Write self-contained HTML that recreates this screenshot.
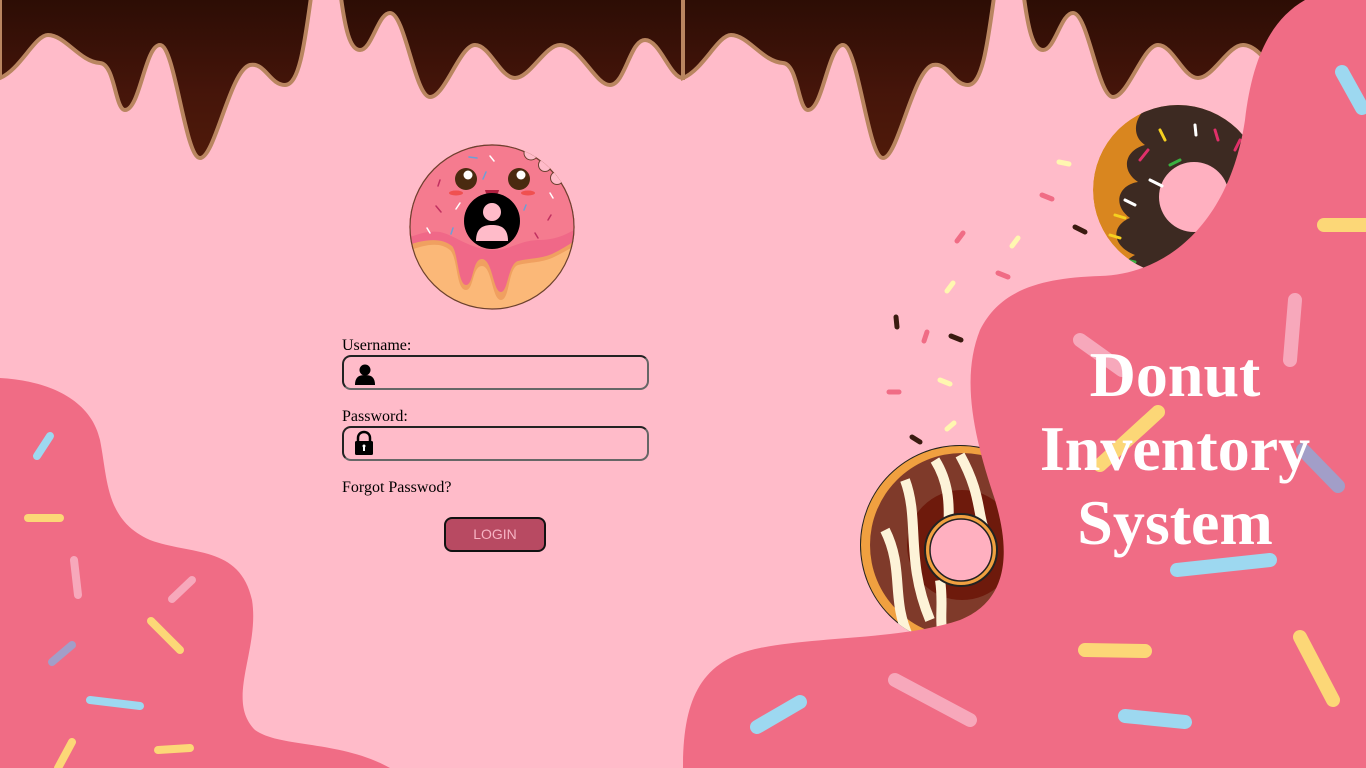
<!DOCTYPE html>
<html><head><meta charset="utf-8"><style>
html,body{margin:0;padding:0;width:1366px;height:768px;overflow:hidden;background:#ffbbc9;font-family:"Liberation Serif",serif}
svg{position:absolute;left:0;top:0}
.lbl{position:absolute;left:342px;font-size:16px;color:#000}
.inp{position:absolute;left:342px;width:303px;height:31px;border:2px solid #222;border-right-color:#666;border-bottom-color:#666;border-radius:9px;box-sizing:content-box}
.btn{position:absolute;left:444px;top:517px;width:98px;height:31px;background:#b84a62;border:2px solid #111;border-radius:8px;color:#f7b3c3;font-family:"Liberation Sans",sans-serif;font-size:14px;text-align:center;line-height:31px}
.title{position:absolute;left:985px;width:380px;top:338px;text-align:center;color:#fff;font-weight:bold;font-size:64px;line-height:74px}
</style></head><body>
<svg width="1366" height="768" viewBox="0 0 1366 768">
<defs>
<linearGradient id="ch" x1="0" y1="0" x2="0" y2="1"><stop offset="0" stop-color="#2a0c04"/><stop offset="0.6" stop-color="#45150a"/><stop offset="1" stop-color="#4f1a0a"/></linearGradient>
<g id="drip"><path d="M0,-10 L0,78 C20,70 35,35 48,35 C65,35 80,62 100,63 C115,64 115,110 125,110 C140,110 145,45 160,45 C175,45 185,158 200,158 C215,158 230,70 250,65 C265,62 270,85 285,85 C300,85 305,40 312,-10 L340,-10 C345,30 350,50 360,50 C372,50 378,13 390,13 C405,13 415,97 430,97 C445,97 460,45 475,45 C490,45 500,78 515,78 C530,78 545,45 560,45 C580,45 595,85 610,85 C625,85 630,40 645,40 C660,40 670,78 683,78 L683,-10 Z" fill="url(#ch)" stroke="#b98560" stroke-width="4"/></g>
<clipPath id="c1"><circle cx="1178" cy="190" r="85"/></clipPath>
<clipPath id="c2"><circle cx="960" cy="545" r="100"/></clipPath>
<clipPath id="c3"><circle cx="492" cy="227" r="82.6"/></clipPath>
</defs>
<use href="#drip"/>
<use href="#drip" x="683"/>

<g clip-path="url(#c1)">
<circle cx="1178" cy="190" r="85" fill="#d9861f"/>
<path d="M1150,105 C1180,95 1230,100 1265,130 L1265,290 L1150,290 C1125,280 1115,265 1135,255 C1110,245 1112,225 1130,218 C1112,205 1118,185 1138,182 C1120,170 1125,150 1145,145 C1130,135 1135,115 1150,105Z" fill="#3d2a22"/>
<circle cx="1194" cy="197" r="35" fill="#ffb0c0"/>
<g stroke-width="3" stroke-linecap="round"><line x1="1160" y1="130" x2="1165" y2="140" stroke="#f5d020"/><line x1="1195" y1="125" x2="1196" y2="135" stroke="#fff"/><line x1="1215" y1="130" x2="1218" y2="140" stroke="#e0306a"/><line x1="1150" y1="180" x2="1162" y2="186" stroke="#fff"/><line x1="1125" y1="200" x2="1135" y2="205" stroke="#fff"/><line x1="1115" y1="215" x2="1125" y2="218" stroke="#f5d020"/><line x1="1170" y1="165" x2="1180" y2="160" stroke="#3ab040"/><line x1="1240" y1="140" x2="1235" y2="150" stroke="#e0306a"/><line x1="1110" y1="235" x2="1120" y2="238" stroke="#f5d020"/><line x1="1140" y1="160" x2="1148" y2="150" stroke="#e0306a"/><line x1="1125" y1="260" x2="1135" y2="262" stroke="#3ab040"/></g>
</g>
<g clip-path="url(#c2)">
<circle cx="960" cy="545" r="100" fill="#f0a040" stroke="#222" stroke-width="2"/>
<circle cx="962" cy="545" r="92" fill="#7f3a2a"/>
<circle cx="962" cy="545" r="55" fill="#6e1a0c"/>
<g stroke="#fdf3d8" stroke-width="10" fill="none"><path d="M905,480 C920,520 905,560 930,620"/><path d="M935,460 C960,500 940,540 955,520"/><path d="M960,455 C985,500 975,520 990,540"/><path d="M885,530 C905,570 890,600 910,640"/><path d="M940,580 C945,610 935,630 950,650"/></g>
<circle cx="961" cy="550" r="36" fill="#f0a040" stroke="#222" stroke-width="2"/>
<circle cx="961" cy="550" r="31" fill="#ffb0c0" stroke="#222" stroke-width="1.5"/>
</g>

<g stroke-width="5" stroke-linecap="round">
<line x1="1059" y1="162" x2="1069" y2="164" stroke="#fff7b0"/>
<line x1="1042" y1="195" x2="1052" y2="199" stroke="#f06c85"/>
<line x1="1075" y1="227" x2="1085" y2="232" stroke="#3a1a10"/>
<line x1="957" y1="241" x2="963" y2="233" stroke="#f06c85"/>
<line x1="1012" y1="246" x2="1018" y2="238" stroke="#fff7b0"/>
<line x1="998" y1="273" x2="1008" y2="277" stroke="#f06c85"/>
<line x1="947" y1="291" x2="953" y2="283" stroke="#fff7b0"/>
<line x1="896" y1="317" x2="897" y2="327" stroke="#3a1a10"/>
<line x1="924" y1="341" x2="927" y2="332" stroke="#f06c85"/>
<line x1="951" y1="336" x2="961" y2="340" stroke="#3a1a10"/>
<line x1="940" y1="380" x2="950" y2="384" stroke="#fff7b0"/>
<line x1="889" y1="392" x2="899" y2="392" stroke="#f06c85"/>
<line x1="947" y1="429" x2="954" y2="423" stroke="#fff7b0"/>
<line x1="912" y1="437" x2="920" y2="442" stroke="#3a1a10"/>
</g>

<path d="M1305,0 L1366,0 L1366,768 L683,768 C683,700 700,660 760,648 C820,636 900,640 960,620 C1010,600 1010,550 995,500 C975,440 960,380 980,330 C1000,290 1040,278 1100,276 C1170,274 1230,220 1245,120 C1252,60 1270,20 1305,0Z" fill="#f06c85"/>
<path d="M0,378 C40,380 90,395 100,440 C108,480 105,520 150,540 C190,555 240,545 252,600 C260,650 225,700 255,730 C280,748 340,740 390,768 L0,768Z" fill="#f06c85"/>

<g stroke-width="14" stroke-linecap="round">
<line x1="1342" y1="72" x2="1362" y2="108" stroke="#9dd8f0"/>
<line x1="1324" y1="225" x2="1366" y2="225" stroke="#fcd777"/>
<line x1="1295" y1="300" x2="1290" y2="360" stroke="#f7a8bb"/>
<line x1="1080" y1="340" x2="1122" y2="370" stroke="#f7a8bb"/>
<line x1="1100" y1="465" x2="1158" y2="412" stroke="#fcd777"/>
<line x1="1303" y1="450" x2="1338" y2="486" stroke="#a29ec8"/>
<line x1="1177" y1="570" x2="1270" y2="560" stroke="#9dd8f0"/>
<line x1="1085" y1="650" x2="1145" y2="651" stroke="#fcd777"/>
<line x1="1300" y1="637" x2="1333" y2="700" stroke="#fcd777"/>
<line x1="895" y1="680" x2="970" y2="720" stroke="#f7a8bb"/>
<line x1="757" y1="727" x2="800" y2="702" stroke="#9dd8f0"/>
<line x1="1125" y1="716" x2="1185" y2="722" stroke="#9dd8f0"/>
</g>
<g stroke-width="8" stroke-linecap="round">
<line x1="37" y1="456" x2="50" y2="436" stroke="#9dd8f0"/>
<line x1="28" y1="518" x2="60" y2="518" stroke="#fcd777"/>
<line x1="74" y1="560" x2="78" y2="595" stroke="#f7a8bb"/>
<line x1="172" y1="599" x2="192" y2="580" stroke="#f7a8bb"/>
<line x1="151" y1="621" x2="180" y2="650" stroke="#fcd777"/>
<line x1="52" y1="662" x2="72" y2="645" stroke="#a29ec8"/>
<line x1="90" y1="700" x2="140" y2="706" stroke="#9dd8f0"/>
<line x1="158" y1="750" x2="190" y2="748" stroke="#fcd777"/>
<line x1="58" y1="768" x2="72" y2="742" stroke="#fcd777"/>
</g>

<g clip-path="url(#c3)">
<rect x="400" y="140" width="190" height="180" fill="#fbb878"/>
<path d="M400,140 L590,140 L590,238 C575,245 565,252 552,258 C540,263 530,262 518,265 C508,268 510,300 501,300 C492,300 492,266 482,266 C472,266 474,290 466,290 C456,290 458,258 450,250 C438,240 420,246 400,254Z" fill="#f0a060"/>
<path d="M400,140 L590,140 L590,232 C575,240 565,248 552,254 C540,259 530,258 518,261 C508,264 508,292 501,292 C493,292 493,260 482,259 C472,259 474,285 466,285 C458,285 458,252 452,246 C440,236 420,240 400,248Z" fill="#f06888"/>
<path d="M400,140 L590,140 L590,220 C575,230 560,240 540,240 C520,240 510,250 495,250 C470,250 455,235 440,232 C425,230 415,236 400,240Z" fill="#f57b8f"/>
</g>
<circle cx="492" cy="227" r="82" fill="none" stroke="#6b4030" stroke-width="1.2"/>
<g clip-path="url(#c3)" fill="#ffbbc9" stroke="#6b4030" stroke-width="1">
<circle cx="531" cy="153" r="7"/>
<circle cx="545" cy="165" r="6.5"/>
<circle cx="557" cy="178" r="6.5"/>
</g>
<circle cx="466" cy="179" r="11" fill="#4a2a10"/><circle cx="519" cy="179" r="11" fill="#4a2a10"/>
<circle cx="468" cy="175" r="4.5" fill="#fff"/><circle cx="521" cy="175" r="4.5" fill="#fff"/>
<ellipse cx="456" cy="193" rx="7" ry="2.5" fill="#f05050"/><ellipse cx="528" cy="193" rx="7" ry="2.5" fill="#f05050"/>
<path d="M485,190 L499,190 C498,198 486,198 485,190Z" fill="#b02040"/>
<g stroke-width="1.5" stroke-linecap="round"><line x1="469" y1="157" x2="477" y2="158" stroke="#6aa0d8"/><line x1="490" y1="156" x2="494" y2="161" stroke="#fff"/><line x1="486" y1="172" x2="483" y2="179" stroke="#6aa0d8"/><line x1="440" y1="180" x2="438" y2="186" stroke="#c03060"/><line x1="436" y1="206" x2="441" y2="212" stroke="#c03060"/><line x1="460" y1="203" x2="456" y2="209" stroke="#fff"/><line x1="526" y1="205" x2="524" y2="210" stroke="#6aa0d8"/><line x1="550" y1="193" x2="553" y2="198" stroke="#fff"/><line x1="427" y1="228" x2="430" y2="233" stroke="#fff"/><line x1="453" y1="228" x2="451" y2="234" stroke="#6aa0d8"/><line x1="535" y1="233" x2="538" y2="238" stroke="#c03060"/><line x1="551" y1="215" x2="548" y2="220" stroke="#c03060"/></g>
<circle cx="492" cy="221" r="28" fill="#000"/>
<circle cx="492" cy="212" r="9" fill="#ffbbc9"/>
<path d="M476,241 C476,228 483,225 492,225 C501,225 508,228 508,241Z" fill="#ffbbc9"/>

<circle cx="365" cy="370" r="5.5" fill="#000"/>
<path d="M355,385 C355,377 359,375 365,375 C371,375 375,377 375,385Z" fill="#000"/>
<path d="M358,442 L358,438 C358,430 370,430 370,438 L370,442" fill="none" stroke="#000" stroke-width="2.5"/>
<rect x="355" y="441" width="18" height="14" rx="1.5" fill="#000"/>
<rect x="363" y="446" width="2" height="5" fill="#fff"/><circle cx="364" cy="446" r="1.5" fill="#fff"/>
</svg>
<div class="lbl" style="top:337px">Username:</div>
<div class="inp" style="top:355px"></div>
<div class="lbl" style="top:408px">Password:</div>
<div class="inp" style="top:426px"></div>
<div class="lbl" style="top:479px">Forgot Passwod?</div>
<div class="btn">LOGIN</div>
<div class="title">Donut<br>Inventory<br>System</div>
</body></html>
